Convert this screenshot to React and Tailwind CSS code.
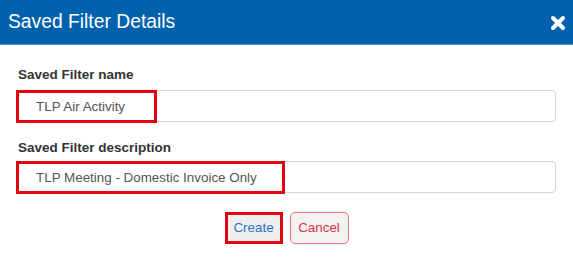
export default function App() {
  return (
    <div className="w-[573px] h-[259px] bg-white font-['Liberation_Sans',Arial,sans-serif] overflow-hidden">
      {/* Header */}
      <div className="h-[45px] bg-[#0061ad] border-b border-[#4a8cc8] flex items-center justify-between pl-[8px] pr-[7px]">
        <h1 className="text-white text-[19.3px] leading-none">Saved Filter Details</h1>
        <svg width="16" height="16" viewBox="0 0 16 16" className="mt-[1px]">
          <path d="M3 3 L13 13 M13 3 L3 13" stroke="white" strokeWidth="4" strokeLinecap="round" />
        </svg>
      </div>

      {/* Body */}
      <div className="pt-[21px] pl-[16px] pr-[17px]">
        <label className="block text-[13.5px] leading-[18px] font-bold text-[#333] pl-[2px]">Saved Filter name</label>
        <div className="relative mt-[6px]">
          <input
            readOnly
            value="TLP Air Activity"
            className="w-full h-[32px] border border-[#d4d4d4] rounded-[4px] pl-[19px] text-[13.4px] text-[#555] outline-none"
          />
          <div className="absolute left-0 top-0 w-[141px] h-[33px] border-[3px] border-[#e3000f]" />
        </div>

        <label className="block mt-[17px] text-[13.5px] leading-[18px] font-bold text-[#333] pl-[2px]">Saved Filter description</label>
        <div className="relative mt-[4px]">
          <input
            readOnly
            value="TLP Meeting - Domestic Invoice Only"
            className="w-full h-[32px] border border-[#d4d4d4] rounded-[4px] pl-[19px] text-[13.4px] text-[#555] outline-none"
          />
          <div className="absolute left-0 top-0 w-[269px] h-[33px] border-[3px] border-[#e3000f]" />
        </div>

        <div className="flex justify-center gap-[7px] mt-[19px] ml-[1px]">
          <div className="relative w-[58px] h-[32px]">
            <button className="w-[56px] h-[30px] mt-[1px] ml-[1px] bg-[#efefef] border border-[#bbb] rounded-[3px] text-[13.4px] text-[#2873c0]">
              Create
            </button>
            <div className="absolute left-0 top-0 w-[58px] h-[32px] border-[3px] border-[#e3000f]" />
          </div>
          <button className="w-[59px] h-[32px] bg-[#f2f2f2] border border-[#e47a7e] rounded-[5px] text-[13.4px] text-[#d9363e]">
            Cancel
          </button>
        </div>
      </div>
    </div>
  );
}
